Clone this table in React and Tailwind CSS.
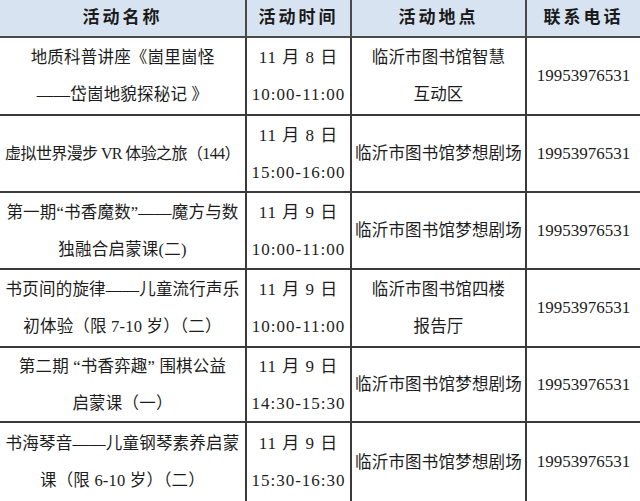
import React from "react";

const font = { fontFamily: '"Liberation Serif", "Noto Sans CJK SC", serif' };

const rows = [
  {
    name: ["地质科普讲座《崮里崮怪", "——岱崮地貌探秘记 》"],
    time: ["11 月 8 日", "10:00-11:00"],
    place: ["临沂市图书馆智慧", "互动区"],
  },
  {
    name: ["虚拟世界漫步 VR 体验之旅（144）"],
    time: ["11 月 8 日", "15:00-16:00"],
    place: ["临沂市图书馆梦想剧场"],
  },
  {
    name: ["第一期“书香魔数”——魔方与数", "独融合启蒙课(二)"],
    time: ["11 月 9 日", "10:00-11:00"],
    place: ["临沂市图书馆梦想剧场"],
  },
  {
    name: ["书页间的旋律——儿童流行声乐", "初体验（限 7-10 岁）（二）"],
    time: ["11 月 9 日", "10:00-11:00"],
    place: ["临沂市图书馆四楼", "报告厅"],
  },
  {
    name: ["第二期 “书香弈趣” 围棋公益", "启蒙课（一）"],
    time: ["11 月 9 日", "14:30-15:30"],
    place: ["临沂市图书馆梦想剧场"],
  },
  {
    name: ["书海琴音——儿童钢琴素养启蒙", "课（限 6-10 岁）（二）"],
    time: ["11 月 9 日", "15:30-16:30"],
    place: ["临沂市图书馆梦想剧场"],
  },
];

function Cell({ lines, last, bottom, small }) {
  return (
    <div
      className={
        "flex flex-col items-center justify-center overflow-hidden border-[#3a3a3a] leading-[37px] text-[#1c1c1c] " +
        (small ? "text-[16px] tracking-[-0.6px] " : "text-[16.5px] tracking-[0.2px] ") +
        (last ? "" : "border-r-2 ") +
        (bottom ? "" : "border-b-2")
      }
    >
      {lines.map((l, i) => (
        <div key={i} className="whitespace-nowrap">
          {l}
        </div>
      ))}
    </div>
  );
}

export default function App() {
  const headers = ["活动名称", "活动时间", "活动地点", "联系电话"];
  return (
    <div
      style={font}
      className="w-[640px] h-[501px] bg-white grid grid-cols-[247px_105px_175px_113px] grid-rows-[38px_78px_77px_77px_78px_75px_78px]"
    >
      {headers.map((h, i) => (
        <div
          key={h}
          className={
            "flex items-center justify-center bg-[#d8e3f1] border-b-2 border-[#4a4a4a] text-[17px] font-bold tracking-[3px] text-[#1a1a1a] " +
            (i < 3 ? "border-r-2" : "")
          }
        >
          {h}
        </div>
      ))}
      {rows.map((r, idx) => {
        const bottom = idx === rows.length - 1;
        return (
          <React.Fragment key={idx}>
            <Cell lines={r.name} bottom={bottom} small={idx === 1} />
            <div
              className={
                "flex flex-col items-center justify-center border-r-2 border-[#3a3a3a] text-[17px] leading-[37px] text-[#1c1c1c] tracking-[1px] " +
                (bottom ? "" : "border-b-2")
              }
            >
              {r.time.map((t, i) => (
                <div key={i} className="whitespace-nowrap">
                  {t}
                </div>
              ))}
            </div>
            <Cell lines={r.place} bottom={bottom} />
            <div
              className={
                "flex items-center justify-center border-[#3a3a3a] text-[17px] text-[#1c1c1c] " +
                (bottom ? "" : "border-b-2")
              }
            >
              19953976531
            </div>
          </React.Fragment>
        );
      })}
    </div>
  );
}
